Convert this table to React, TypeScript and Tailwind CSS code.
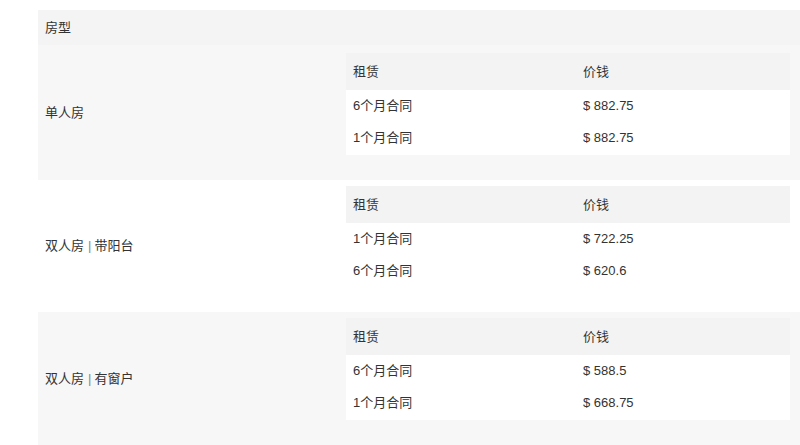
const font = "font-['Liberation_Sans','Noto_Sans_CJK_SC',sans-serif]";

type Lease = { term: string; price: string };
type Room = { name: string; tag?: string; bg: string; box: string; rows: Lease[] };

const rooms: Room[] = [
  {
    name: "单人房",
    bg: "bg-[#f7f7f7]",
    box: "h-[135px] pt-[8px]",
    rows: [
      { term: "6个月合同", price: "$ 882.75" },
      { term: "1个月合同", price: "$ 882.75" },
    ],
  },
  {
    name: "双人房",
    tag: "带阳台",
    bg: "bg-white",
    box: "h-[132px] pt-[6px]",
    rows: [
      { term: "1个月合同", price: "$ 722.25" },
      { term: "6个月合同", price: "$ 620.6" },
    ],
  },
  {
    name: "双人房",
    tag: "有窗户",
    bg: "bg-[#f7f7f7]",
    box: "h-[134px] pt-[6px]",
    rows: [
      { term: "6个月合同", price: "$ 588.5" },
      { term: "1个月合同", price: "$ 668.75" },
    ],
  },
];

function LeaseTable({ rows }: { rows: Lease[] }) {
  return (
    <div className="w-[444px]">
      <div className="flex h-[37px] items-center bg-[#f3f3f3]">
        <div className="w-[230px] pl-[7px]">租赁</div>
        <div className="pl-[7px]">价钱</div>
      </div>
      <div className="bg-white pb-[1px]">
        {rows.map((r, i) => (
          <div key={i} className="flex h-[32px] items-center">
            <div className="w-[230px] pl-[7px]">{r.term}</div>
            <div className="pl-[7px]">{r.price}</div>
          </div>
        ))}
      </div>
    </div>
  );
}

export default function App() {
  return (
    <div className={`${font} h-[445px] w-[800px] overflow-hidden bg-white pl-[38px] pt-[10px] text-[13px] text-[#333]`}>
      <div className="w-[762px]">
        <div className="flex h-[35px] items-center bg-[#f4f4f4] pl-[7px]">房型</div>
        {rooms.map((room, i) => (
          <div key={i} className={`flex ${room.bg}`}>
            <div className="flex w-[308px] items-center pl-[7px]">
              {room.name}
              {room.tag && (
                <>
                  <span className="ml-[4px] mr-[3px] text-[#888]">|</span>
                  {room.tag}
                </>
              )}
            </div>
            <div className={room.box}>
              <LeaseTable rows={room.rows} />
            </div>
          </div>
        ))}
      </div>
    </div>
  );
}
